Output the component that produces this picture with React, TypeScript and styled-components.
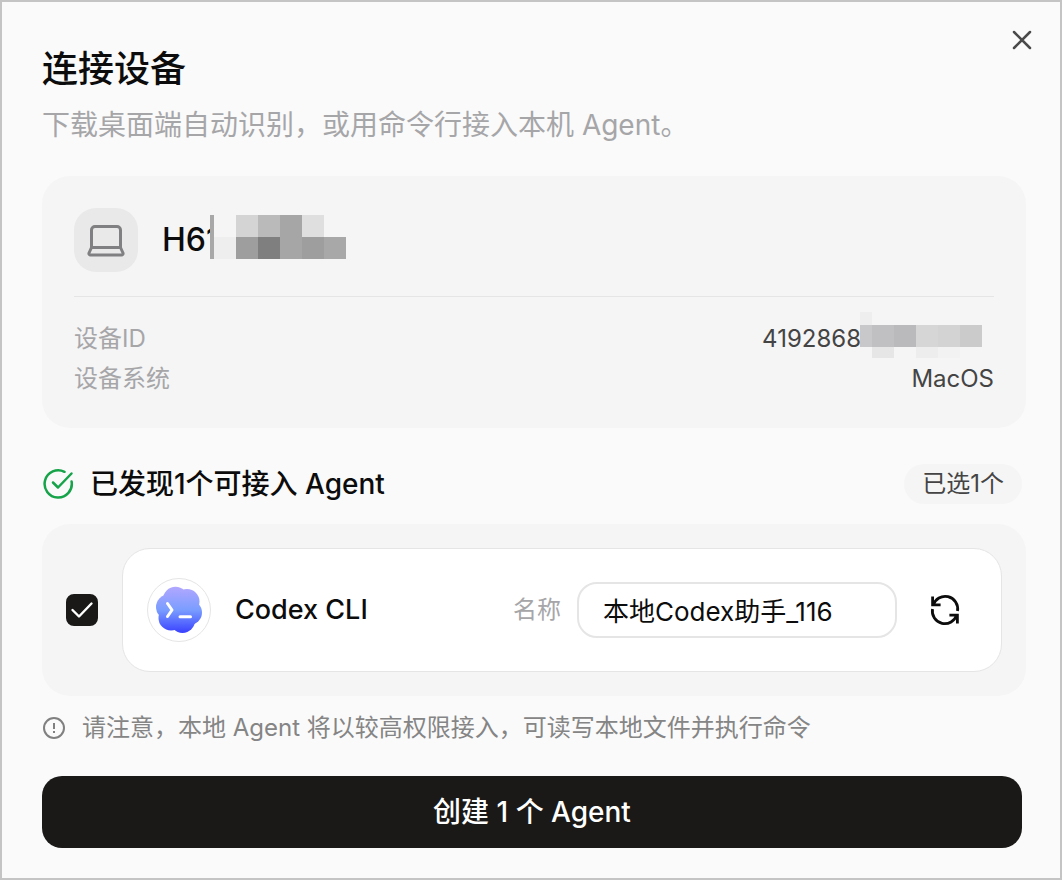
import React, { useState } from "react";
import styled, { createGlobalStyle } from "styled-components";

const GlobalStyle = createGlobalStyle`
  *, *::before, *::after { box-sizing: border-box; }
  body {
    margin: 0;
    background: #fafafa;
    color: #0c0c0c;
    font-family: Inter, "Noto Sans CJK SC", sans-serif;
  }
  button, input { font: inherit; color: inherit; }
`;

const Dialog = styled.main`
  display: flex;
  flex-direction: column;
  min-height: 100vh;
  padding: 40px 38px 30px 40px;
  border: 2px solid #c4c4c4;
  background: #fafafa;
`;

const Header = styled.header`
  display: flex;
  justify-content: space-between;
  align-items: flex-start;
`;

const Title = styled.h1`
  margin: 0;
  font-size: 36px;
  line-height: 54px;
  font-weight: 500;
`;

const Subtitle = styled.p`
  margin: 0;
  padding-top: 8px;
  font-size: 28px;
  line-height: 42px;
  color: #a6a6a9;
`;

const IconButton = styled.button<{ $size: number }>`
  display: grid;
  place-items: center;
  width: ${(p) => p.$size}px;
  height: ${(p) => p.$size}px;
  flex: none;
  padding: 0;
  border: 0;
  background: none;
  cursor: pointer;
`;

const CloseArea = styled.div`
  margin: -18px -16px 0 0;
`;

const Panel = styled.section`
  margin-right: -4px;
  border-radius: 28px;
  background: #f5f5f5;
`;

const DevicePanel = styled(Panel)`
  margin-top: 30px;
  padding: 32px 32px 29px;
`;

const DeviceHead = styled.div`
  display: flex;
  align-items: center;
  gap: 24px;
  padding-bottom: 24px;
  border-bottom: 1px solid #e5e5e5;
`;

const DeviceBadge = styled.div`
  display: grid;
  place-items: center;
  width: 64px;
  height: 64px;
  border-radius: 22px;
  background: #e9e9ea;
`;

const DeviceName = styled.h2`
  position: relative;
  margin: 0;
  padding-right: 128px;
  font-size: 32px;
  line-height: 44px;
  font-weight: 500;
`;

const NameMask = styled.span`
  position: absolute;
  top: -3px;
  left: 48px;
  line-height: 0;
`;

const DeviceFacts = styled.dl`
  display: flex;
  flex-direction: column;
  margin: 0;
  padding-top: 22px;
`;

const Fact = styled.div`
  display: flex;
  justify-content: space-between;
  font-size: 24px;
  line-height: 40px;
`;

const FactLabel = styled.dt`
  color: #a6a6a9;
`;

const FactValue = styled.dd<{ $masked?: boolean }>`
  position: relative;
  margin: 0;
  padding-right: ${(p) => (p.$masked ? 133 : 0)}px;
  color: #444;
`;

const IdMask = styled.span`
  position: absolute;
  top: -7px;
  right: 0;
  line-height: 0;
`;

const FoundRow = styled.div`
  display: flex;
  align-items: center;
  justify-content: space-between;
  padding: 36px 0 20px;
`;

const FoundTitle = styled.h2`
  display: flex;
  align-items: center;
  gap: 16px;
  margin: 0;
  font-size: 28px;
  line-height: 40px;
  font-weight: 500;
`;

const Tag = styled.span`
  padding: 0 18px;
  border-radius: 20px;
  background: #f5f5f5;
  font-size: 24px;
  line-height: 40px;
  color: #444;
`;

const AgentPanel = styled(Panel)`
  display: flex;
  align-items: center;
  gap: 24px;
  padding: 24px;
`;

const Checkbox = styled.input`
  appearance: none;
  flex: none;
  width: 32px;
  height: 32px;
  margin: 0;
  border: 2px solid #1a1918;
  border-radius: 8px;
  cursor: pointer;
  &:checked {
    background: #1a1918
      url("data:image/svg+xml,%3Csvg xmlns='http://www.w3.org/2000/svg' viewBox='0 0 28 28' fill='none' stroke='white' stroke-width='2.4' stroke-linecap='round' stroke-linejoin='round'%3E%3Cpath d='M4.5 14l6.5 6.500L23.500 7.500'/%3E%3C/svg%3E")
      center / contain no-repeat;
  }
`;

const AgentCard = styled.div`
  display: flex;
  flex: 1;
  align-items: center;
  min-width: 0;
  height: 124px;
  padding: 0 24px;
  border: 1px solid #e5e5e5;
  border-radius: 28px;
  background: #fff;
`;

const AgentLogo = styled.div`
  display: grid;
  place-items: center;
  width: 64px;
  height: 64px;
  border: 1px solid #e5e5e5;
  border-radius: 50%;
`;

const AgentName = styled.label`
  flex: 1;
  padding-left: 24px;
  font-size: 27px;
  line-height: 40px;
  font-weight: 500;
`;

const FieldLabel = styled.label`
  padding-right: 16px;
  font-size: 24px;
  line-height: 40px;
  color: #a6a6a9;
`;

const NameInput = styled.input`
  width: 320px;
  height: 56px;
  margin-right: 16px;
  padding: 0 24px 2px;
  border: 2px solid #e5e5e5;
  border-radius: 20px;
  background: #fff;
  font-size: 26px;
  outline: none;
`;

const Notice = styled.p`
  display: flex;
  align-items: center;
  gap: 16px;
  margin: 0;
  padding: 12px 0 28px;
  font-size: 24px;
  line-height: 40px;
  color: #858585;
`;

const SubmitButton = styled.button`
  height: 72px;
  padding: 0 0 4px;
  border: 0;
  border-radius: 20px;
  background: #1a1918;
  color: #fff;
  font-size: 28px;
  font-weight: 500;
  cursor: pointer;
`;

type Cell = [x: number, y: number, w: number, h: number, fill: string];

const NAME_CELLS: Cell[] = [
  [0, 0, 4, 44, "#a8a8a8"],
  [4, 0, 22, 22, "#f5f5f5"],
  [4, 22, 22, 22, "#eeeeee"],
  [26, 0, 22, 22, "#d4d4d4"],
  [48, 0, 22, 22, "#bababa"],
  [70, 0, 22, 44, "#a6a6a6"],
  [92, 0, 22, 22, "#dfdfdf"],
  [26, 22, 22, 22, "#9e9e9e"],
  [48, 22, 22, 22, "#7f7f7f"],
  [92, 22, 22, 22, "#9e9e9e"],
  [114, 22, 22, 22, "#a8a8a8"],
];

const ID_CELLS: Cell[] = [
  [0, 0, 12, 13, "#eeeeee"],
  [0, 13, 12, 22, "#c8c8ca"],
  [12, 13, 22, 22, "#c0c0c2"],
  [34, 13, 22, 22, "#bababc"],
  [56, 13, 22, 22, "#d6d6d7"],
  [78, 13, 22, 22, "#d3d3d4"],
  [100, 13, 22, 22, "#cbcbcc"],
  [12, 35, 22, 11, "#e6e6e6"],
  [56, 35, 22, 11, "#ededed"],
  [78, 35, 22, 11, "#f2f2f2"],
];

function Mosaic({ cells, width, height }: { cells: Cell[]; width: number; height: number }) {
  return (
    <svg width={width} height={height} shapeRendering="crispEdges" aria-hidden="true">
      {cells.map(([x, y, w, h, fill]) => (
        <rect key={`${x}-${y}`} x={x} y={y} width={w} height={h} fill={fill} />
      ))}
    </svg>
  );
}

function LaptopIcon() {
  return (
    <svg width="40" height="40" viewBox="0 0 40 40" fill="none" stroke="#808082" strokeWidth="3" strokeLinejoin="round">
      <path d="M5.500 27.500V10a3.500 3.500 0 0 1 3.500-3.500h22a3.500 3.500 0 0 1 3.500 3.500v17.500" />
      <path d="M5.500 27.500h29l2.500 5.500a1.500 1.500 0 0 1-1.500 2h-31a1.500 1.500 0 0 1-1.500-2z" />
    </svg>
  );
}

function FoundIcon() {
  return (
    <svg width="32" height="32" viewBox="0 0 32 32" fill="none" stroke="#16a34a" strokeWidth="2.500" strokeLinecap="round" strokeLinejoin="round">
      <path d="M22.500 3.800A13.600 13.600 0 1 0 29.600 13.500" />
      <path d="M11 14.500l5 5L29.500 5.500" />
    </svg>
  );
}

const LOBES = [
  [20.5, 13.3],
  [32, 15.5],
  [34.5, 26.5],
  [27.5, 34.5],
  [16, 32],
  [13.5, 21],
];

function CodexLogo() {
  return (
    <svg width="48" height="48" viewBox="0 0 48 48" fill="none">
      <defs>
        <linearGradient id="codex" x1="24" y1="1" x2="24" y2="47" gradientUnits="userSpaceOnUse">
          <stop stopColor="#b1a7ff" />
          <stop offset="0.5" stopColor="#7a9dff" />
          <stop offset="1" stopColor="#3941ff" />
        </linearGradient>
      </defs>
      {LOBES.map(([cx, cy]) => (
        <circle key={`${cx}-${cy}`} cx={cx} cy={cy} r="12.500" fill="url(#codex)" />
      ))}
      <path d="M12.500 17.500l4.500 6.500-4.500 6.500M25 30.800h10.500" stroke="#fff" strokeWidth="3" strokeLinecap="round" strokeLinejoin="round" />
    </svg>
  );
}

function RefreshIcon() {
  return (
    <svg width="32" height="32" viewBox="0 0 32 32" fill="none" stroke="#0c0c0c" strokeWidth="2.800">
      <path d="M4.200 11.300A12.500 12.500 0 0 1 28.500 17M27.800 20.700A12.500 12.500 0 0 1 3.500 15" />
      <path d="M3.600 2.500v8.300h8M28.400 29.500v-8.300h-8" />
    </svg>
  );
}

export default function App() {
  const [name, setName] = useState("本地Codex助手_116");
  const [checked, setChecked] = useState(true);

  return (
    <>
      <GlobalStyle />
      <Dialog>
        <Header>
          <div>
            <Title>连接设备</Title>
            <Subtitle>下载桌面端自动识别，或用命令行接入本机 Agent。</Subtitle>
          </div>
          <CloseArea>
            <IconButton $size={32} type="button" aria-label="关闭">
              <svg width="20" height="20" viewBox="0 0 20 20" stroke="#4a4a4a" strokeWidth="2.500" strokeLinecap="round">
                <path d="M2 2l16 16M18 2L2 18" />
              </svg>
            </IconButton>
          </CloseArea>
        </Header>

        <DevicePanel>
          <DeviceHead>
            <DeviceBadge>
              <LaptopIcon />
            </DeviceBadge>
            <DeviceName>
              H61
              <NameMask>
                <Mosaic cells={NAME_CELLS} width={136} height={44} />
              </NameMask>
            </DeviceName>
          </DeviceHead>
          <DeviceFacts>
            <Fact>
              <FactLabel>设备ID</FactLabel>
              <FactValue $masked>
                4192868
                <IdMask>
                  <Mosaic cells={ID_CELLS} width={134} height={46} />
                </IdMask>
              </FactValue>
            </Fact>
            <Fact>
              <FactLabel>设备系统</FactLabel>
              <FactValue>MacOS</FactValue>
            </Fact>
          </DeviceFacts>
        </DevicePanel>

        <FoundRow>
          <FoundTitle>
            <FoundIcon />
            已发现1个可接入 Agent
          </FoundTitle>
          <Tag>已选1个</Tag>
        </FoundRow>

        <AgentPanel>
          <Checkbox id="agent" type="checkbox" checked={checked} onChange={(e) => setChecked(e.target.checked)} />
          <AgentCard>
            <AgentLogo>
              <CodexLogo />
            </AgentLogo>
            <AgentName htmlFor="agent">Codex CLI</AgentName>
            <FieldLabel htmlFor="agent-name">名称</FieldLabel>
            <NameInput id="agent-name" value={name} onChange={(e) => setName(e.target.value)} />
            <IconButton $size={64} type="button" aria-label="刷新">
              <RefreshIcon />
            </IconButton>
          </AgentCard>
        </AgentPanel>

        <Notice>
          <svg width="24" height="24" viewBox="0 0 24 24" fill="none" stroke="#808080" strokeWidth="2">
            <circle cx="12" cy="12" r="10" />
            <path d="M12 7v6M12 15v2" />
          </svg>
          请注意，本地 Agent 将以较高权限接入，可读写本地文件并执行命令
        </Notice>

        <SubmitButton type="button">创建 1 个 Agent</SubmitButton>
      </Dialog>
    </>
  );
}
